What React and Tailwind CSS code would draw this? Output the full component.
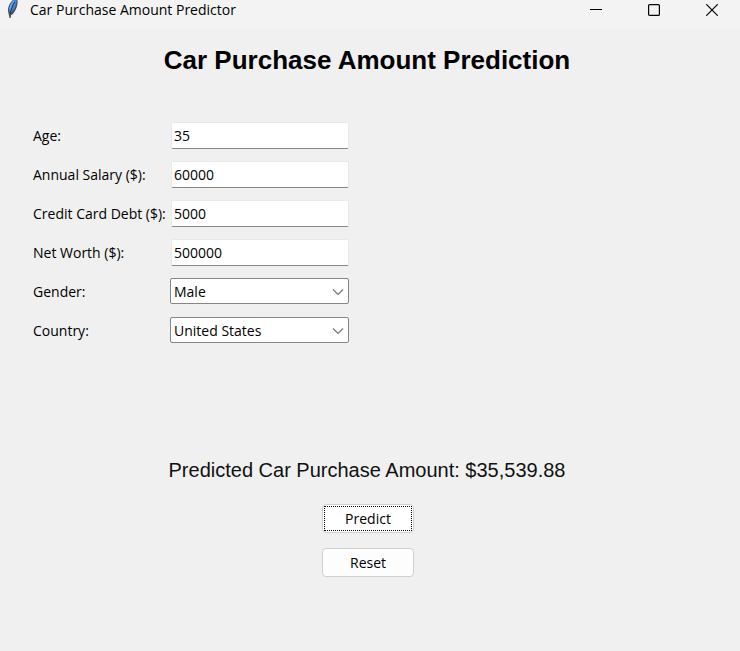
import { useState } from "react";

const textFields = [
  { id: "age", label: "Age:", value: "35" },
  { id: "salary", label: "Annual Salary ($):", value: "60000" },
  { id: "debt", label: "Credit Card Debt ($):", value: "5000" },
  { id: "worth", label: "Net Worth ($):", value: "500000" },
];

const selectFields = [
  { id: "gender", label: "Gender:", options: ["Male", "Female"] },
  { id: "country", label: "Country:", options: ["United States", "Canada", "Germany"] },
];

function Feather() {
  return (
    <svg className="h-5 w-4 shrink-0" viewBox="0 0 16 20" aria-hidden="true">
      <path d="M13.5 0 L9 0 C6 2.5 3.8 6.5 4 11 L4.6 14 L5.5 18 L6.8 18 L7 15.2 L9 14 C12 10.5 14.2 5 13.5 0Z" fill="#4a5461" />
      <path d="M12.6 0 L9.5 0 C6.8 2.5 4.8 6.5 5 11 L6.5 12.5 C10 10 12.8 5 12.6 0Z" fill="#4487d3" />
      <path d="M10.8 2 C8.8 5 7 9.5 6 14" stroke="#17345c" strokeWidth="1" fill="none" />
      <path d="M10 1 C8 3.5 6.6 6 6 9" stroke="#8fc0f5" strokeWidth="0.8" fill="none" />
    </svg>
  );
}

function TitleBar() {
  return (
    <header className="flex h-[29px] items-start bg-[#f3f3f3] pl-1">
      <Feather />
      <span className="ml-[10px] flex-1 whitespace-nowrap text-[14px] leading-[19px]">Car Purchase Amount Predictor</span>
      <div className="-mr-px flex h-5">
        <button type="button" aria-label="Minimize" className="flex w-[58px] items-center justify-center">
          <svg className="h-3 w-3" viewBox="0 0 12 12"><path d="M0 5.5H12" stroke="#000" /></svg>
        </button>
        <button type="button" aria-label="Maximize" className="flex w-[58px] items-center justify-center">
          <svg className="h-3 w-3" viewBox="0 0 12 12"><rect x="0.6" y="0.6" width="10.8" height="10.8" rx="1" fill="none" stroke="#000" strokeWidth="1.2" /></svg>
        </button>
        <button type="button" aria-label="Close" className="flex w-[58px] items-center justify-center">
          <svg className="h-3 w-3" viewBox="0 0 12 12"><path d="M0.3 0.3L11.7 11.7M11.7 0.3L0.3 11.7" stroke="#000" strokeWidth="1.2" /></svg>
        </button>
      </div>
    </header>
  );
}

export default function App() {
  const [result] = useState("$35,539.88");
  return (
    <div className="flex min-h-screen flex-col bg-[#f0f0f0] font-['Open_Sans','Noto_Sans',sans-serif] text-[14px] text-black">
      <TitleBar />
      <main className="flex flex-1 flex-col">
        <h1 className="mt-4 pr-[6px] text-center font-['Liberation_Sans',Arial,sans-serif] text-[26px] font-bold leading-[30px]">
          Car Purchase Amount Prediction
        </h1>
        <form className="flex flex-col" onSubmit={(e) => e.preventDefault()}>
          <div className="mt-[47px] grid grid-cols-[137px_179px] gap-y-3 pl-[33px]">
            {textFields.map((f) => (
              <div key={f.id} className="contents">
                <label htmlFor={f.id} className="whitespace-nowrap leading-[27px]">{f.label}</label>
                <input
                  id={f.id}
                  defaultValue={f.value}
                  className="ml-px h-[27px] rounded-[2px] border border-[#e9e9e9] border-b-[#868686] bg-white px-[2px] outline-none"
                />
              </div>
            ))}
            {selectFields.map((f) => (
              <div key={f.id} className="contents">
                <label htmlFor={f.id} className="whitespace-nowrap leading-[27px]">{f.label}</label>
                <div className="relative">
                  <select
                    id={f.id}
                    className="h-[26px] w-full appearance-none rounded-[2px] border border-[#868686] bg-white px-[3px] outline-none"
                  >
                    {f.options.map((o) => (
                      <option key={o}>{o}</option>
                    ))}
                  </select>
                  <svg className="pointer-events-none absolute right-[5px] top-[10px] h-2 w-3" viewBox="0 0 12 8">
                    <path d="M1 1.5L6 6.5L11 1.5" fill="none" stroke="#777" strokeWidth="1.2" />
                  </svg>
                </div>
              </div>
            ))}
          </div>
          <p className="mt-[114px] pr-[6px] text-center font-['Liberation_Sans',Arial,sans-serif] text-[20px] leading-6 text-[#111]">
            Predicted Car Purchase Amount: {result}
          </p>
          <div className="mt-[22px] flex flex-col items-center gap-[15px] pr-1">
            <button type="submit" className="h-[29px] w-[92px] rounded-[4px] border border-[#d0d0d0] bg-white p-px">
              <span className="flex h-full items-center justify-center border border-dotted border-black">Predict</span>
            </button>
            <button type="reset" className="h-[29px] w-[92px] rounded-[4px] border border-[#d0d0d0] bg-[#fdfdfd]">
              Reset
            </button>
          </div>
        </form>
      </main>
    </div>
  );
}
